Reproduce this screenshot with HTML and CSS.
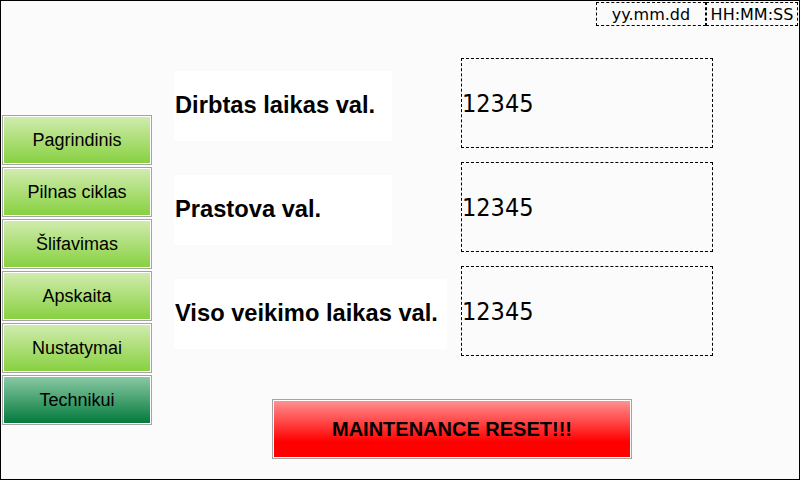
FILE: index.html
```html
<!DOCTYPE html>
<html lang="lt">
<head>
<meta charset="utf-8">
<title>Panel</title>
<link rel="stylesheet" href="styles.css">
</head>
<body>
<div class="screen">
  <header class="topbar">
    <div class="clock date">yy.mm.dd</div>
    <div class="clock time">HH:MM:SS</div>
  </header>
  <div class="content">
    <nav class="nav">
      <button class="nav-btn">Pagrindinis</button>
      <button class="nav-btn">Pilnas ciklas</button>
      <button class="nav-btn">Šlifavimas</button>
      <button class="nav-btn">Apskaita</button>
      <button class="nav-btn">Nustatymai</button>
      <button class="nav-btn nav-btn-active">Technikui</button>
    </nav>
    <main class="main">
      <div class="rows">
        <div class="row">
          <div class="label">Dirbtas laikas val.</div>
          <div class="value">12345</div>
        </div>
        <div class="row">
          <div class="label">Prastova val.</div>
          <div class="value">12345</div>
        </div>
        <div class="row">
          <div class="label">Viso veikimo laikas val.</div>
          <div class="value">12345</div>
        </div>
      </div>
      <div class="actions">
        <button class="reset">MAINTENANCE RESET!!!</button>
      </div>
    </main>
  </div>
</div>
</body>
</html>
```
FILE: styles.css
```css
html, body {
  margin: 0;
  padding: 0;
}

body {
  width: 800px;
  height: 480px;
  overflow: hidden;
  font-family: "Liberation Sans", Arial, sans-serif;
}

.screen {
  width: 800px;
  height: 480px;
  box-sizing: border-box;
  border: 1px solid #000;
  background: #fbfbfb;
}

.topbar {
  display: flex;
  justify-content: flex-end;
  padding: 1px 1px 0 0;
}

.clock {
  height: 24px;
  box-sizing: border-box;
  border: 1px dashed #000;
  display: flex;
  align-items: center;
  justify-content: center;
  font-family: "DejaVu Sans", Verdana, sans-serif;
  font-size: 16px;
  color: #000;
}

.date {
  width: 110px;
}

.time {
  width: 92px;
}

.content {
  display: grid;
  grid-template-columns: 150px auto;
  column-gap: 22px;
  align-items: start;
  padding-left: 1px;
}

.nav {
  margin-top: 89px;
  display: flex;
  flex-direction: column;
  gap: 2px;
}

.nav-btn {
  width: 150px;
  height: 50px;
  margin: 0;
  padding: 0;
  box-sizing: border-box;
  border: 1px solid #a4a4a4;
  box-shadow: inset 0 0 0 1px #ffffff;
  background: linear-gradient(#d2ecb0, #86d03e);
  font-family: "Liberation Sans", Arial, sans-serif;
  font-size: 18px;
  color: #000;
}

.nav-btn-active {
  background: linear-gradient(#8ccaa6, #00783a);
}

.main {
  margin-top: 32px;
}

.rows {
  display: flex;
  flex-direction: column;
  gap: 14px;
}

.row {
  display: grid;
  grid-template-columns: 287px 252px;
  height: 90px;
}

.label {
  justify-self: start;
  align-self: center;
  margin-top: 5px;
  height: 70px;
  min-width: 218px;
  box-sizing: border-box;
  padding: 0 9px 0 1px;
  display: flex;
  align-items: center;
  background: #ffffff;
  font-weight: bold;
  font-size: 23.7px;
  color: #000;
  white-space: nowrap;
}

.value {
  box-sizing: border-box;
  border: 1px dashed #000;
  display: flex;
  align-items: center;
  font-family: "DejaVu Sans Condensed", "DejaVu Sans", sans-serif;
  font-stretch: condensed;
  font-size: 25px;
  color: #000;
}

.actions {
  margin-top: 43px;
  padding-left: 98px;
}

.reset {
  width: 360px;
  height: 60px;
  margin: 0;
  padding: 0;
  box-sizing: border-box;
  border: 1px solid #a4a4a4;
  box-shadow: inset 0 0 0 1px #ffffff;
  background: linear-gradient(#ff9494, #ff0000 72%);
  font-family: "Liberation Sans", Arial, sans-serif;
  font-weight: bold;
  font-size: 20px;
  color: #000;
}
```
